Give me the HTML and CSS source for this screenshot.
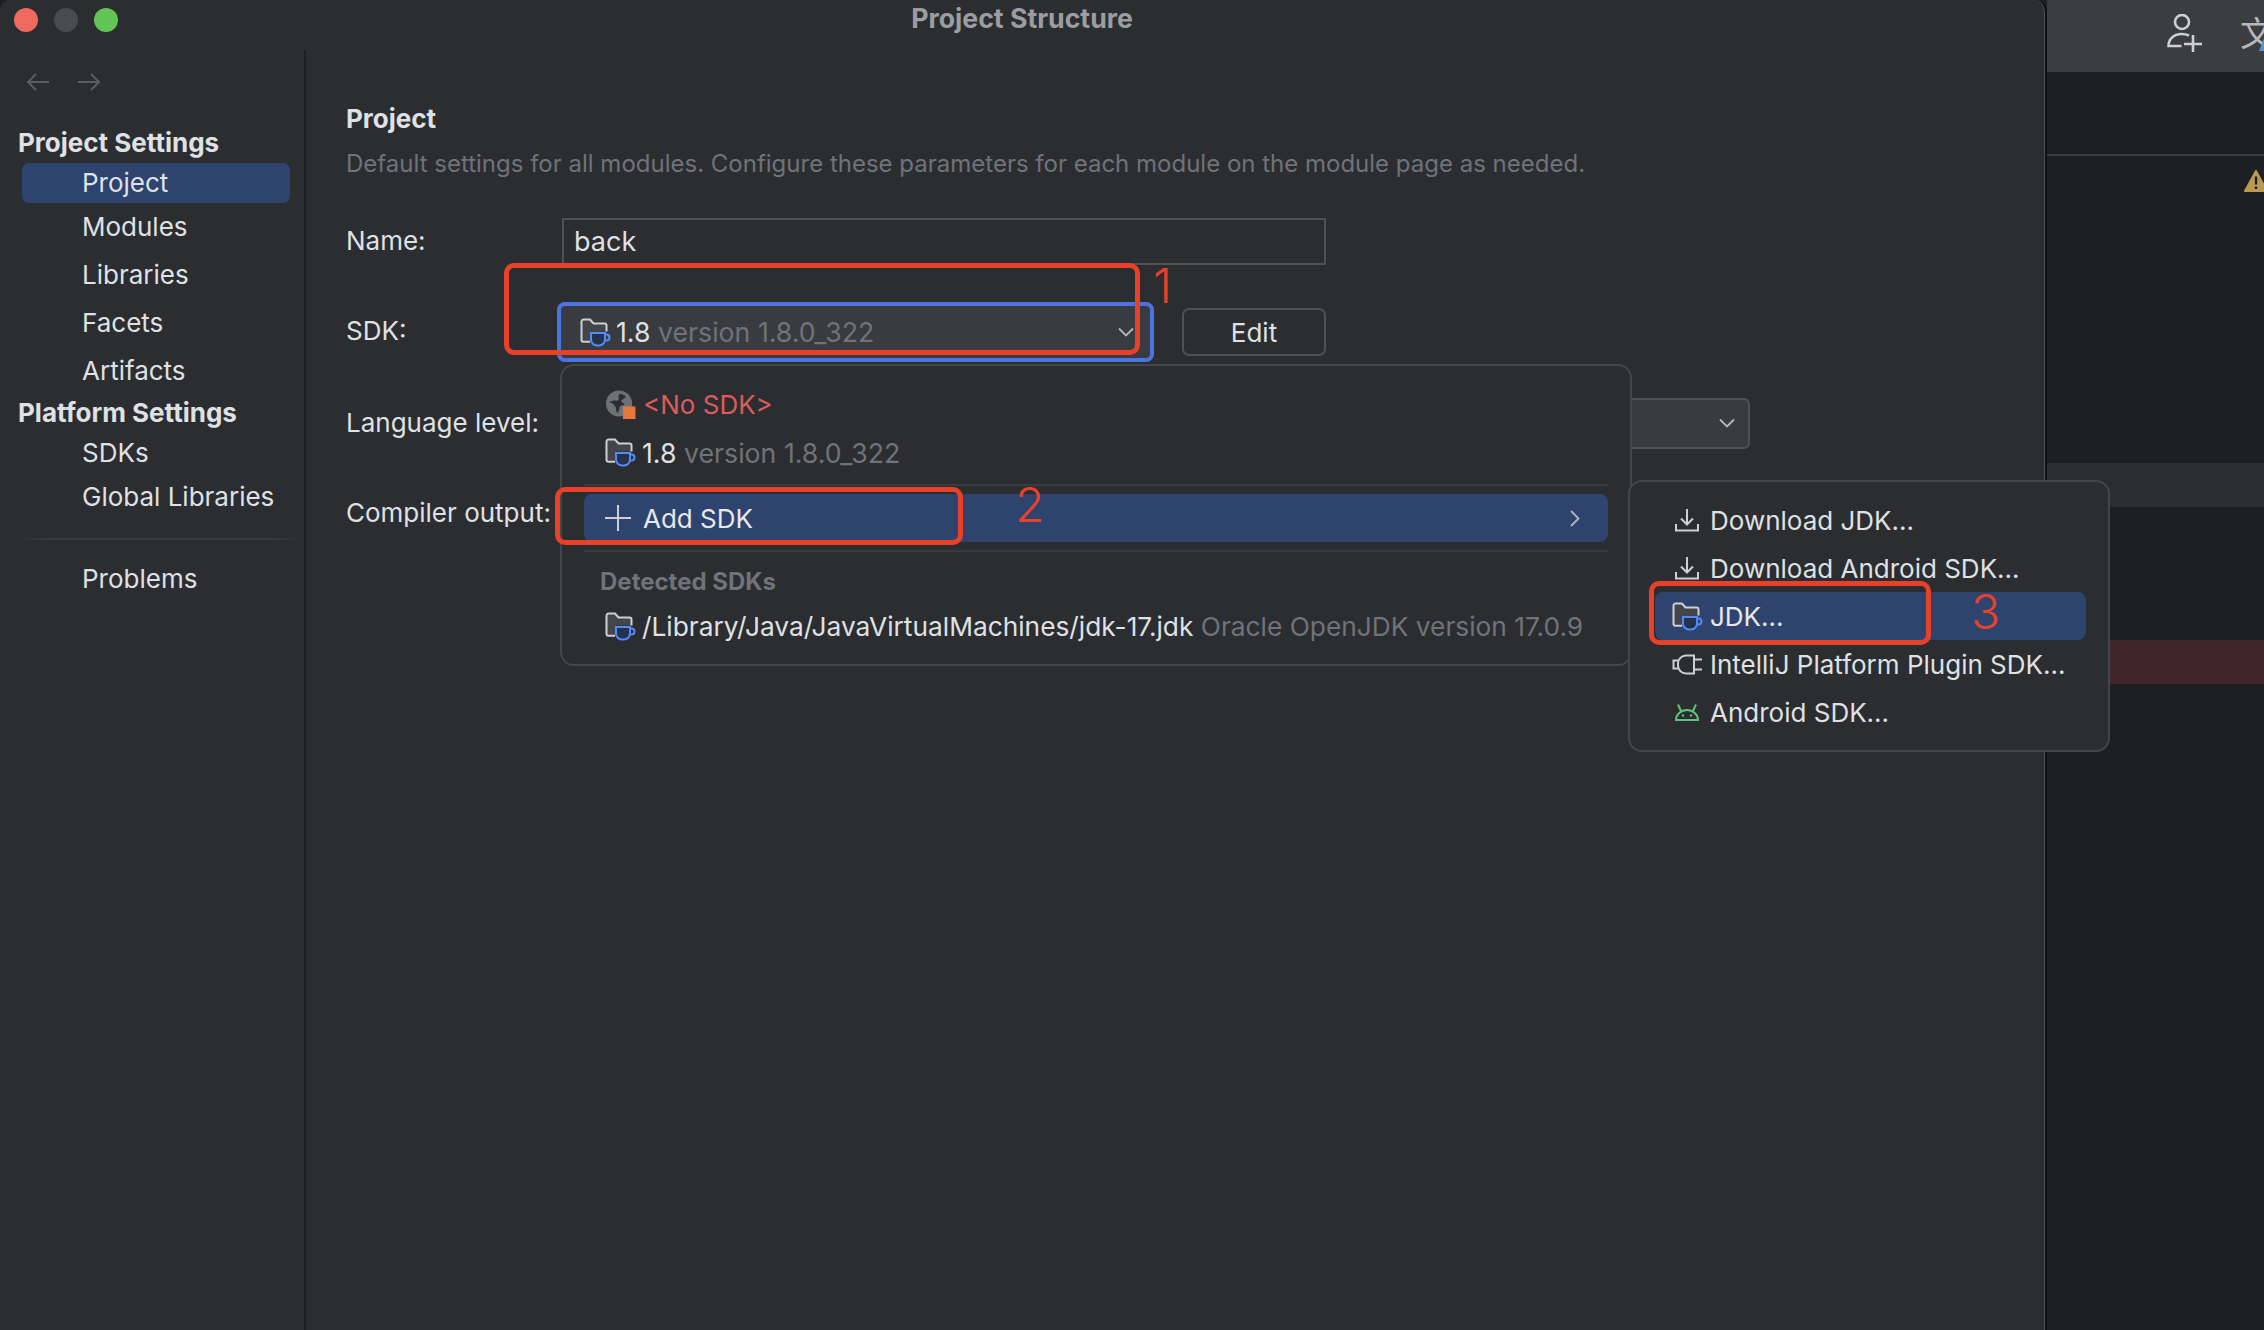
FILE: index.html
```html
<!DOCTYPE html>
<html lang="en">
<head>
<meta charset="utf-8">
<title>Project Structure</title>
<link rel="stylesheet" href="styles.css">
</head>
<body>
<svg class="defs" width="0" height="0" aria-hidden="true">
  <symbol id="jdk" viewBox="0 0 31 29">
    <path d="M1.5 22V3.5a2 2 0 0 1 2-2h6.5l3.500 4h11a2 2 0 0 1 2 2v6H11v10H3.500a2 2 0 0 1-2-2z" fill="#43454a"/>
    <path d="M10 23.700H3.500a2 2 0 0 1-2-2V3.500a2 2 0 0 1 2-2H10l3.500 4h11a2 2 0 0 1 2 2v6" fill="none" stroke="#ced0d6" stroke-width="2"/>
    <path d="M11 15h14v6.500a6 6 0 0 1-6 6h-2a6 6 0 0 1-6-6z" fill="#25324d" stroke="#548af7" stroke-width="2"/>
    <path d="M25 16.500h1.500a3 3 0 0 1 0 6H24.500" fill="none" stroke="#548af7" stroke-width="2"/>
  </symbol>
  <symbol id="down" viewBox="0 0 24 24">
    <path d="M12 1v15M6 10.500l6 6 6-6M1 16v6.500h22V16" fill="none" stroke="#ced0d6" stroke-width="2"/>
  </symbol>
  <symbol id="chev" viewBox="0 0 16 10">
    <path d="M1 1.500l7 7 7-7" fill="none" stroke="#b4b8bf" stroke-width="1.800"/>
  </symbol>
</svg>

<div class="screen">
  <section class="dialog">
    <header class="titlebar">
      <div class="lights"><i class="light red"></i><i class="light grey"></i><i class="light green"></i></div>
      <h1 class="title">Project Structure</h1>
    </header>
    <div class="dialog-body">
      <nav class="sidebar">
        <div class="nav-arrows">
          <svg width="24" height="20" viewBox="0 0 24 20"><path d="M23 10H2M10 2l-8 8 8 8" fill="none" stroke="#5a5d63" stroke-width="2"/></svg>
          <svg width="24" height="20" viewBox="0 0 24 20"><path d="M1 10h21M14 2l8 8-8 8" fill="none" stroke="#5a5d63" stroke-width="2"/></svg>
        </div>
        <div class="side-head">Project Settings</div>
        <div class="side-item selected">Project</div>
        <div class="side-item gap4">Modules</div>
        <div class="side-item gap8">Libraries</div>
        <div class="side-item gap8">Facets</div>
        <div class="side-item gap8">Artifacts</div>
        <div class="side-head gap2">Platform Settings</div>
        <div class="side-item">SDKs</div>
        <div class="side-item gap4">Global Libraries</div>
        <div class="side-sep"></div>
        <div class="side-item">Problems</div>
      </nav>
      <main class="content">
        <h2 class="heading">Project</h2>
        <p class="desc">Default settings for all modules. Configure these parameters for each module on the module page as needed.</p>
        <div class="row row-name">
          <label class="label">Name:</label>
          <div class="input">back</div>
        </div>
        <div class="row row-sdk">
          <label class="label">SDK:</label>
          <div class="combo">
            <svg class="ico"><use href="#jdk"/></svg>
            <span class="combo-text">1.8 <span class="muted">version 1.8.0_322</span></span>
            <svg class="chev" width="16" height="10"><use href="#chev"/></svg>
          </div>
          <button class="btn">Edit</button>
        </div>
        <div class="row row-lang">
          <label class="label">Language level:</label>
          <div class="lang">
            <svg class="chev" width="16" height="10"><use href="#chev"/></svg>
          </div>
        </div>
        <div class="row row-out">
          <label class="label">Compiler output:</label>
        </div>
      </main>
    </div>
  </section>

  <aside class="backdrop">
    <div class="bd-top">
      <svg class="bd-user" width="36" height="38" viewBox="0 0 36 38"><circle cx="15" cy="8" r="7" fill="none" stroke="#ced0d6" stroke-width="2.600"/><path d="M22 21.500C20 20.500 17 20 14.500 20 7 20 1.500 25 1.500 32h13M17 30h18M26 21v17" fill="none" stroke="#ced0d6" stroke-width="2.600"/></svg>
      <span class="bd-trans">文</span>
    </div>
    <div class="bd-tabs"></div>
    <div class="bd-editor">
      <svg class="bd-warn" width="24" height="22" viewBox="0 0 24 22"><path d="M12 1L23 21H1z" fill="#b99a54" stroke="#b99a54" stroke-linejoin="round" stroke-width="2"/><path d="M12 6.500v8M12 16.500v2.500" stroke="#1e1f22" stroke-width="2.400"/></svg>
    </div>
    <div class="bd-band"></div>
    <div class="bd-gap"></div>
    <div class="bd-error"></div>
    <div class="bd-rest"></div>
  </aside>

  <div class="popup popup-sdk">
    <div class="pop-row pop-first"><svg class="ico globe" viewBox="0 0 31 30"><circle cx="14" cy="14" r="13.500" fill="#6e7277"/><path d="M4 12.500c3-1.500 6-2 8-1l2-2.500c-1-2-1-3.500 1-5 3 .5 5 2 6 3-1 2-3 2.500-5 3.500l2 3c2 .5 2 1 1 2l-4 1-1.500 6-2 1-1-6-3-3.500z" fill="#2b2d30"/><rect x="18" y="17" width="13" height="13" fill="#e6763c"/></svg><span class="err">&lt;No SDK&gt;</span></div>
    <div class="pop-row"><svg class="ico"><use href="#jdk"/></svg><span class="text-wide">1.8 <span class="muted">version 1.8.0_322</span></span></div>
    <div class="pop-sep"></div>
    <div class="pop-row active">
      <svg class="ico plus" viewBox="0 0 26 26"><path d="M13 0v26M0 13h26" stroke="#ced0d6" stroke-width="2"/></svg><span class="bright">Add SDK</span>
      <svg class="arrow" width="10" height="17" viewBox="0 0 10 17"><path d="M1 1l7.500 7.500L1 16" fill="none" stroke="#b4b8bf" stroke-width="1.800"/></svg>
    </div>
    <div class="pop-sep"></div>
    <div class="pop-head">Detected SDKs</div>
    <div class="pop-row"><svg class="ico"><use href="#jdk"/></svg><span class="text-mid">/Library/Java/JavaVirtualMachines/jdk-17.jdk <span class="muted">Oracle OpenJDK version 17.0.9</span></span></div>
  </div>

  <div class="popup popup-add">
    <div class="sub-row"><svg class="sub-ico"><use href="#down"/></svg><span>Download JDK...</span></div>
    <div class="sub-row"><svg class="sub-ico"><use href="#down"/></svg><span>Download Android SDK...</span></div>
    <div class="sub-row active"><svg class="ico"><use href="#jdk"/></svg><span class="bright">JDK...</span></div>
    <div class="sub-row"><svg class="ico" viewBox="0 0 31 24"><path d="M6 8H1.500v8H6M22 3H14a8 8 0 0 0-8 8v2a8 8 0 0 0 8 8h8zM22 7h8M22 17h8" fill="none" stroke="#ced0d6" stroke-width="2"/></svg><span>IntelliJ Platform Plugin SDK...</span></div>
    <div class="sub-row"><svg class="sub-ico" viewBox="0 0 24 18"><path d="M1 17a11 10 0 0 1 22 0zM6 8L3 1.500M18 8l3-6.500" fill="none" stroke="#5fc27a" stroke-width="2"/><circle cx="8" cy="12.500" r="1.200" fill="#5fc27a"/><circle cx="16" cy="12.500" r="1.200" fill="#5fc27a"/></svg><span>Android SDK...</span></div>
  </div>

  <div class="mark mark1"></div><span class="num num1">1</span>
  <div class="mark mark2"></div><span class="num num2">2</span>
  <div class="mark mark3"></div><span class="num num3">3</span>
</div>
</body>
</html>
```

FILE: styles.css
```css
* { box-sizing: border-box; }
html, body { margin: 0; padding: 0; height: 100%; background: #1e1f22; overflow: hidden; }
body { font-family: Inter, "Noto Sans", sans-serif; font-size: 26px; color: #dfe1e5; }
.defs { position: absolute; }

.screen { position: relative; display: flex; width: 2264px; height: 1330px; overflow: hidden; }

/* Dialog */
.dialog { width: 2047px; height: 100%; flex: none; display: flex; flex-direction: column; background: #2b2d30; border-right: 2px solid #101113; box-shadow: inset -1px 0 0 #4e5157; border-top-right-radius: 12px; border-top-left-radius: 10px; }
.titlebar { height: 50px; flex: none; display: flex; align-items: flex-start; position: relative; }
.lights { display: flex; gap: 16px; padding: 8px 0 0 14px; }
.light { display: block; width: 24px; height: 24px; border-radius: 50%; }
.red { background: #ee6a5f; }
.grey { background: #4a4b4e; }
.green { background: #61c555; }
.title { margin: 3px 0 0 -1px; position: absolute; left: 0; right: 0; text-align: center; font-size: 26.700px; line-height: 30px; font-weight: 700; color: #9b9da1; }

.dialog-body { flex: 1; display: flex; min-height: 0; }
.sidebar { width: 306px; flex: none; border-right: 2px solid #1e1f22; padding-top: 20px; }
.nav-arrows { display: flex; gap: 27px; padding-left: 26px; height: 24px; align-items: center; }
.side-head { font-weight: 700; font-size: 26px; line-height: 36px; padding-left: 18px; margin-top: 31px; color: #dfe1e5; }
.side-head.gap2 { margin-top: 4px; }
.side-item { height: 40px; line-height: 40px; margin: 0 14px 0 22px; padding-left: 60px; border-radius: 7px; color: #dfe1e5; }
.side-item.selected { background: #2e436e; margin-top: 2px; }
.gap4 { margin-top: 4px; }
.gap7 { margin-top: 7px; }
.gap8 { margin-top: 8px; }
.side-head + .side-item { margin-top: 2px; }
.side-sep { height: 2px; margin: 21px 0 19px 14px; background: linear-gradient(90deg, #2b2d30, #393b40 12%, #393b40 88%, #2b2d30); }

.content { flex: 1; padding: 0 0 0 40px; }
.heading { margin: 52px 0 0 0; font-size: 26px; line-height: 34px; font-weight: 700; color: #dfe1e5; }
.desc { margin: 11px 0 0 0; font-size: 24px; line-height: 34px; color: #6f737a; white-space: nowrap; }
.row { display: flex; align-items: center; }
.label { width: 216px; flex: none; line-height: 36px; }
.row-name { margin-top: 36px; height: 48px; }
.row-sdk { margin-top: 37px; height: 48px; align-items: flex-start; }
.row-sdk .label { margin-top: 11px; }
.row-lang { margin-top: 48px; height: 50px; }
.row-out { margin-top: 45px; height: 40px; }
.input { width: 764px; height: 47px; border: 2px solid #4e5157; padding: 0 10px; line-height: 43px; font-size: 27px; color: #dfe1e5; }
.combo { width: 597px; height: 60px; margin-left: -5px; flex: none; display: flex; align-items: center; padding: 0 16px 0 19px; gap: 5px; background: #393b40; border: 4px solid #4a74e0; border-radius: 8px; font-size: 26.700px; }
.combo-text { flex: 1; }
.muted { color: #6f737a; }
.bright { color: #e6e8ec; }
.text-wide { font-size: 26.700px; margin-left: -1px; }
.text-mid { font-size: 26.300px; margin-left: -1px; }
.ico { width: 31px; height: 29px; flex: none; }
.btn { width: 144px; height: 48px; margin: 6px 0 0 28px; flex: none; background: transparent; border: 2px solid #4e5157; border-radius: 7px; color: #dfe1e5; font: inherit; padding: 0; }
.lang { width: 1188px; height: 51px; margin-left: 0; flex: none; display: flex; align-items: center; justify-content: flex-end; padding-right: 13px; background: #393b40; border: 2px solid #4e5157; border-radius: 6px; }

/* Backdrop editor */
.backdrop { flex: 1; min-width: 0; display: flex; flex-direction: column; }
.bd-top { height: 72px; flex: none; background: #3c3d3f; display: flex; align-items: flex-start; padding: 14px 0 0 120px; gap: 37px; overflow: hidden; position: relative; }
.bd-user { flex: none; }
.bd-trans { font-family: "Noto Sans CJK SC", sans-serif; font-size: 34px; line-height: 36px; color: #b6b8bb; flex: none; }
.bd-top::after { content: ""; position: absolute; right: 0; top: 38px; width: 0; height: 0; border-left: 5px solid transparent; border-bottom: 13px solid #4f93d9; }
.bd-tabs { height: 84px; flex: none; background: #1e1f22; border-bottom: 2px solid #393b40; }
.bd-editor { height: 307px; flex: none; background: #1e1f22; position: relative; }
.bd-warn { position: absolute; left: 197px; top: 14px; }
.bd-band { height: 44px; flex: none; background: #2b2d30; }
.bd-gap { height: 133px; flex: none; background: #1e1f22; }
.bd-error { height: 44px; flex: none; background: #402529; }
.bd-rest { flex: 1; background: #1e1f22; }

/* Popups */
.popup { position: absolute; background: #2b2d30; border: 2px solid #43454a; border-radius: 14px; }
.popup-sdk { left: 560px; top: 364px; width: 1072px; height: 302px; padding: 15px 22px 0; }
.popup-add { left: 1628px; top: 480px; width: 482px; height: 272px; padding: 14px 22px 0 25px; }
.pop-row { height: 47px; display: flex; align-items: center; gap: 7px; padding-left: 21px; margin-bottom: 0; white-space: nowrap; border-radius: 8px; }
.pop-first { margin-bottom: 1px; }
.err { color: #db5c5c; margin-left: 0; }
.pop-sep { height: 2px; margin: 8px 0; background: #393b40; }
.active { background: #2e436e; }
.pop-row.active { height: 48px; }
.plus { width: 26px; height: 26px; margin-right: 5px; }
.arrow { margin-left: auto; margin-right: 28px; }
.pop-head { height: 30px; margin-top: 15px; padding-left: 16px; line-height: 30px; font-size: 24px; font-weight: 700; color: #6f737a; }
.pop-sep + .pop-head + .pop-row { margin-top: 6px; }
.sub-row { height: 48px; display: flex; align-items: center; gap: 10px; padding-left: 20px; white-space: nowrap; border-radius: 8px; }
.sub-row .ico { margin-right: -3px; margin-left: -3px; }
.sub-ico { width: 24px; height: 24px; flex: none; margin-right: 1px; }

/* Annotations */
.mark { position: absolute; border: 5px solid #e8412a; border-radius: 10px; }
.mark1 { left: 504px; top: 263px; width: 636px; height: 92px; }
.mark2 { left: 555px; top: 487px; width: 408px; height: 58px; }
.mark3 { left: 1649px; top: 581px; width: 282px; height: 64px; }
.num { position: absolute; font-family: Inter, "Liberation Sans", sans-serif; font-size: 48px; line-height: 48px; color: #e8412a; font-weight: 300; }
.num1 { left: 1153px; top: 262px; }
.num2 { left: 1015px; top: 481px; }
.num3 { left: 1971px; top: 588px; }
```
